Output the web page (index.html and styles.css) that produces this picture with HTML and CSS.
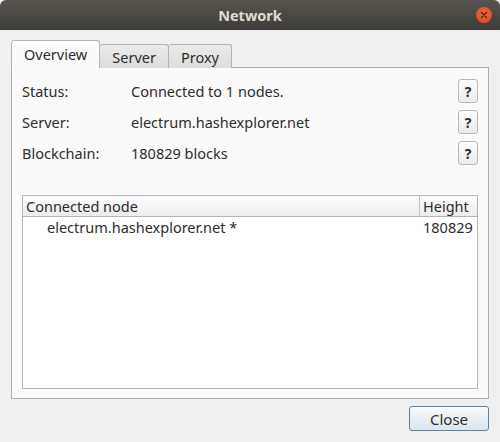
FILE: index.html
```html
<!DOCTYPE html>
<html>
<head>
<meta charset="utf-8">
<link rel="stylesheet" href="styles.css">
</head>
<body>
<div class="window">
  <div class="titlebar">
    <span class="title">Network</span>
    <span class="close-dot">
      <svg width="16" height="16" viewBox="0 0 16 16"><path d="M5.5 5.5 L10.5 10.5 M10.5 5.5 L5.5 10.5" stroke="#3a2a22" stroke-width="1.4" stroke-linecap="round"/></svg>
    </span>
  </div>
  <div class="content">
    <div class="tabs">
      <div class="tab active">Overview</div>
      <div class="tab">Server</div>
      <div class="tab">Proxy</div>
    </div>
    <div class="pane">
      <div class="row"><span class="label">Status:</span><span class="value">Connected to 1 nodes.</span><button class="help">?</button></div>
      <div class="row"><span class="label">Server:</span><span class="value">electrum.hashexplorer.net</span><button class="help">?</button></div>
      <div class="row"><span class="label">Blockchain:</span><span class="value">180829 blocks</span><button class="help">?</button></div>
      <div class="list">
        <div class="list-head">
          <div class="col-node">Connected node</div>
          <div class="col-height">Height</div>
        </div>
        <div class="list-row">
          <div class="col-node indent">electrum.hashexplorer.net *</div>
          <div class="col-height">180829</div>
        </div>
      </div>
    </div>
    <div class="footer">
      <button class="close-btn">Close</button>
    </div>
  </div>
</div>
</body>
</html>
```

FILE: styles.css
```css
html, body {
  margin: 0;
  padding: 0;
  background: #efefef;
}
body {
  font-family: "Noto Sans", "Open Sans", sans-serif;
  font-size: 14.5px;
  color: #2d2d2d;
}
.window {
  width: 500px;
  height: 442px;
  display: flex;
  flex-direction: column;
  background: #efefef;
}
.titlebar {
  height: 30px;
  flex: none;
  background: linear-gradient(#58554f, #3e3c38);
  border-radius: 6px 6px 0 0;
  display: flex;
  align-items: center;
  justify-content: center;
  position: relative;
}
.title {
  color: #dfdbd2;
  font-weight: bold;
  font-size: 14.5px;
}
.close-dot {
  position: absolute;
  right: 8px;
  top: 7px;
  width: 16px;
  height: 16px;
  border-radius: 50%;
  background: radial-gradient(circle at 50% 40%, #f0663a, #d9481e);
  display: flex;
}
.content {
  flex: 1;
  padding: 11px 11px 0 11px;
  display: flex;
  flex-direction: column;
}
.tabs {
  display: flex;
  align-items: flex-end;
  height: 27px;
  position: relative;
  z-index: 1;
  margin-bottom: -1px;
}
.tab {
  height: 23px;
  padding: 0 12px;
  display: flex;
  align-items: center;
  border: 1px solid #b4b4b4;
  border-bottom: none;
  border-left: none;
  background: linear-gradient(#ebebeb, #dcdcdc);
  border-radius: 3px 3px 0 0;
  color: #2d2d2d;
}
.tab.active {
  height: 26px;
  background: #fafafa;
  border-left: 1px solid #b4b4b4;
  padding: 0 12px 1px 12px;
}
.pane {
  height: 332px;
  border: 1px solid #acacac;
  background: #fafafa;
  padding: 11px 10px 9px 10px;
  display: flex;
  flex-direction: column;
  box-sizing: border-box;
}
.row {
  display: flex;
  align-items: center;
  height: 24px;
  margin-bottom: 7px;
}
.label {
  width: 109px;
}
.value {
  flex: 1;
}
.help {
  width: 20px;
  height: 24px;
  padding: 0;
  border: 1px solid #b9b9b9;
  border-radius: 3px;
  background: linear-gradient(#fbfbfb, #ececec);
  font-family: "Noto Sans", sans-serif;
  font-size: 14px;
  font-weight: bold;
  color: #2d2d2d;
}
.list {
  margin-top: 23px;
  flex: 1;
  border: 1px solid #b4b4b4;
  background: #ffffff;
}
.list-head {
  display: flex;
  height: 20px;
  border-bottom: 1px solid #b4b4b4;
  background: linear-gradient(#fcfcfc, #ececec);
}
.list-head .col-node {
  border-right: 1px solid #c2c2c2;
}
.col-node {
  flex: 1;
  padding-left: 3px;
  line-height: 20px;
}
.col-height {
  width: 54px;
  padding-left: 3px;
  line-height: 20px;
}
.list-row {
  display: flex;
  height: 20px;
}
.indent {
  padding-left: 24px;
}
.footer {
  display: flex;
  justify-content: flex-end;
  padding-top: 7px;
}
.close-btn {
  width: 80px;
  height: 25px;
  border: 1px solid #5b84a8;
  border-radius: 3px;
  background: linear-gradient(#f8fafc, #dce4eb);
  font-family: "Noto Sans", sans-serif;
  font-size: 15px;
  color: #2d2d2d;
  padding: 0;
}
```
